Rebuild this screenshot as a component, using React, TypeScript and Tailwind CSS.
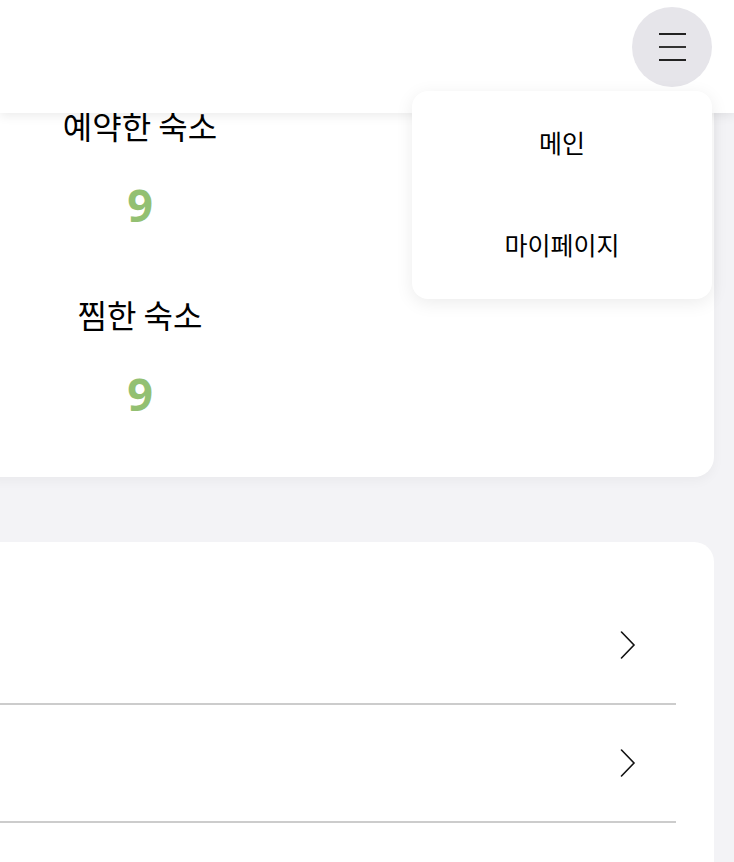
const font = { fontFamily: '"Noto Sans CJK KR", "Noto Sans", sans-serif' }

const stats = [
  { label: '예약한 숙소', value: 9 },
  { label: '찜한 숙소', value: 9 },
]

const menuItems = ['메인', '마이페이지']

function Chevron() {
  return (
    <svg width="16" height="28" viewBox="0 0 16 28" fill="none" aria-hidden="true">
      <polyline
        points="1.5,1 14,14 1.5,27"
        stroke="#111"
        strokeWidth="1.6"
        strokeLinecap="round"
        strokeLinejoin="miter"
      />
    </svg>
  )
}

export default function App() {
  return (
    <div
      className="relative h-[862px] overflow-hidden bg-[#f3f3f6] text-black"
      style={font}
    >
      <header className="absolute inset-x-0 top-0 z-10 h-[113px] bg-white shadow-[0_3px_10px_rgba(0,0,0,0.08)]">
        <div className="flex justify-end pr-[22px] pt-[7px]">
          <button
            type="button"
            aria-label="메뉴"
            className="flex h-[80px] w-[80px] flex-col items-center justify-center gap-[11.5px] rounded-full bg-[#e6e5ea]"
          >
            <span className="block h-[1.5px] w-[27px] bg-[#222]" />
            <span className="block h-[1.5px] w-[27px] bg-[#333]" />
            <span className="block h-[1.5px] w-[27px] bg-[#222]" />
          </button>
        </div>
      </header>

      <nav className="absolute left-[412px] top-[91px] z-20 w-[300px] overflow-hidden rounded-[16px] bg-white shadow-[0_4px_18px_rgba(0,0,0,0.08)]">
        <ul className="pb-[4px]">
          {menuItems.map((item) => (
            <li
              key={item}
              className="flex h-[102px] items-center justify-center text-[25px] leading-none"
            >
              {item}
            </li>
          ))}
        </ul>
      </nav>

      <main>
        <section className="-ml-[30px] w-[744px] rounded-[20px] bg-white pb-[55px] pl-[30px] pt-[107px] shadow-[0_4px_12px_rgba(0,0,0,0.04)]">
          <ul className="w-[280px]">
            {stats.map((s, i) => (
              <li
                key={s.label}
                className={`flex flex-col items-center ${i > 0 ? 'mt-[63px]' : ''}`}
              >
                <span className="text-[32px] font-normal leading-[36px]">
                  {s.label}
                </span>
                <span
                  className="mt-[34px] text-[45px] font-bold leading-[56px] text-[#93c072]"
                  style={{ fontFamily: '"Noto Sans", sans-serif' }}
                >
                  {s.value}
                </span>
              </li>
            ))}
          </ul>
        </section>

        <section className="-ml-[30px] mt-[65px] w-[744px] rounded-[20px] bg-white pl-[30px] pr-[38px] pt-[45px]">
          <ul>
            {[0, 1, 2].map((row) => (
              <li
                key={row}
                className="flex h-[118px] items-center justify-end border-b-2 border-[#cccccc] pr-[40px]"
              >
                <Chevron />
              </li>
            ))}
          </ul>
        </section>
      </main>
    </div>
  )
}
